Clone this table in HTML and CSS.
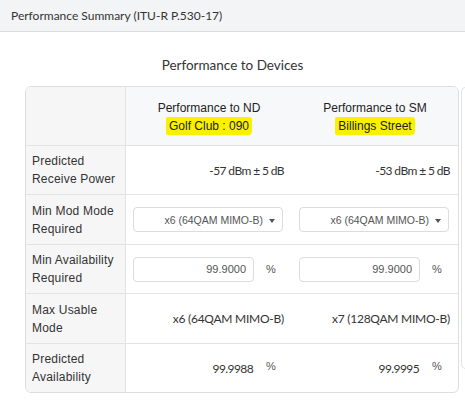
FILE: index.html
```html
<!DOCTYPE html>
<html>
<head>
<meta charset="utf-8">
<link rel="stylesheet" href="styles.css">
</head>
<body>
<div class="topbar">Performance Summary (ITU-R P.530-17)</div>
<div class="title">Performance to Devices</div>
<div class="cards">
  <div class="card">
    <div class="cell label head"></div>
    <div class="cell colhead"><div>Performance to ND</div><div><span class="mark">Golf Club : 090</span></div></div>
    <div class="cell colhead"><div>Performance to SM</div><div><span class="mark">Billings Street</span></div></div>

    <div class="cell label row">Predicted<br>Receive Power</div>
    <div class="cell value tight row">-57 dBm ± 5 dB</div>
    <div class="cell value tight row">-53 dBm ± 5 dB</div>

    <div class="cell label row">Min Mod Mode<br>Required</div>
    <div class="cell ctrl row"><div class="select"><span>x6 (64QAM MIMO-B)</span><span class="caret"></span></div></div>
    <div class="cell ctrl row"><div class="select"><span>x6 (64QAM MIMO-B)</span><span class="caret"></span></div></div>

    <div class="cell label row">Min Availability<br>Required</div>
    <div class="cell ctrl row"><div class="input">99.9000</div><span class="pct">%</span></div>
    <div class="cell ctrl row"><div class="input">99.9000</div><span class="pct">%</span></div>

    <div class="cell label row">Max Usable<br>Mode</div>
    <div class="cell value mode row">x6 (64QAM MIMO-B)</div>
    <div class="cell value mode row">x7 (128QAM MIMO-B)</div>

    <div class="cell label row">Predicted<br>Availability</div>
    <div class="cell ctrl row"><div class="plain">99.9988</div><span class="pct up">%</span></div>
    <div class="cell ctrl row"><div class="plain">99.9995</div><span class="pct up">%</span></div>
  </div>
  <div class="card2"></div>
</div>
</body>
</html>
```

FILE: styles.css
```css
* { box-sizing: border-box; }
html, body { margin: 0; padding: 0; background: #fff; }
body { font-family: Lato, "Liberation Sans", sans-serif; color: #333; width: 465px; height: 402px; overflow: hidden; }

.topbar {
  height: 32px;
  background: #f3f4f6;
  border-bottom: 1px solid #dcdcdc;
  font-size: 12px;
  line-height: 31px;
  padding-left: 11px;
  color: #333;
}

.title {
  margin-top: 23px;
  height: 20px;
  line-height: 20px;
  text-align: center;
  font-size: 13.5px;
  color: #333;
}

.cards {
  margin-top: 11px;
  padding-left: 25px;
  display: flex;
  align-items: flex-start;
  gap: 2px;
}

.card {
  flex: 0 0 434px;
  width: 434px;
  border: 1px solid #dedede;
  border-radius: 6px;
  overflow: hidden;
  display: grid;
  grid-template-columns: 100px 166px 166px;
  grid-template-rows: 58px 49px 50px 49px 50px 49px;
}

.card2 {
  flex: 0 0 20px;
  height: 282px;
  margin-top: 1px;
  border: 1px solid #e2e2e2;
  border-right: none;
  border-radius: 5px 0 0 5px;
}

.cell { display: flex; align-items: center; }
.row { border-top: 1px solid #e3e3e3; }

.label {
  background: #f6f6f6;
  border-right: 1px solid #e3e3e3;
  padding-left: 6px;
  font-family: "Liberation Sans", Arial, sans-serif;
  font-size: 12px;
  letter-spacing: 0.2px;
  line-height: 18px;
  color: #333;
}

.colhead {
  background: #f7f8fa;
  flex-direction: column;
  justify-content: center;
  font-family: "Liberation Sans", Arial, sans-serif;
  font-size: 12px;
  line-height: 18px;
  color: #222;
  text-align: center;
  padding-top: 1px;
}

.mark {
  background: #fbf000;
  padding: 2px 3px 2px 3px;
  border-radius: 2px 3px 4px 2px;
}

.value {
  justify-content: flex-end;
  padding-right: 8px;
  font-size: 12px;
  color: #333;
}
.value.tight { letter-spacing: -0.6px; }
.value.mode { letter-spacing: -0.25px; }

.ctrl { padding-left: 7px; }

.select {
  width: 150px;
  height: 25px;
  border: 1px solid #dcdcdc;
  border-radius: 4px;
  display: flex;
  align-items: center;
  justify-content: flex-end;
  padding-right: 7px;
  font-family: "Liberation Sans", Arial, sans-serif;
  font-size: 10.5px;
  color: #555;
  gap: 6px;
}

.caret {
  width: 0; height: 0;
  border-left: 3.5px solid transparent;
  border-right: 3.5px solid transparent;
  border-top: 4px solid #555;
  margin-top: 2px;
}

.input {
  width: 121px;
  height: 25px;
  border: 1px solid #dcdcdc;
  border-radius: 4px;
  text-align: right;
  padding-right: 7px;
  line-height: 23px;
  font-family: "Liberation Sans", Arial, sans-serif;
  font-size: 11px;
  color: #555;
}

.plain {
  width: 121px;
  text-align: right;
  padding-right: 1px;
  font-size: 12px;
  letter-spacing: -0.6px;
  color: #333;
}

.pct {
  margin-left: 12px;
  font-family: "Liberation Sans", Arial, sans-serif;
  font-size: 11px;
  color: #555;
}
.pct.up { position: relative; top: -2px; }
```
